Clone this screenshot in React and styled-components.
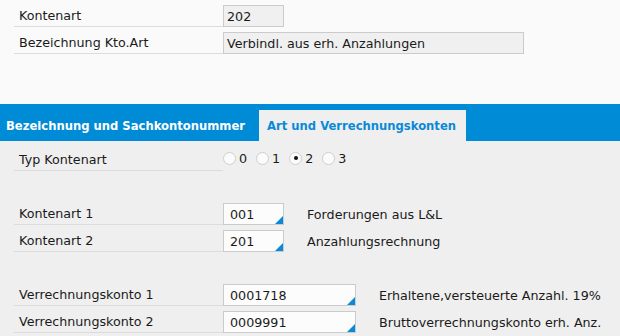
import styled, { createGlobalStyle } from "styled-components";

const GlobalStyle = createGlobalStyle`
  html, body {
    margin: 0;
    padding: 0;
    background: #efefef;
    font-family: "DejaVu Sans", Verdana, sans-serif;
    font-size: 12.7px;
    color: #1a1a1a;
  }
`;

const Page = styled.div`
  width: 620px;
  height: 336px;
  overflow: hidden;
  display: flex;
  flex-direction: column;
`;

const Header = styled.div`
  box-sizing: border-box;
  height: 104px;
  background: #fafafa;
  padding-top: 5px;
  display: flex;
  flex-direction: column;
  gap: 5px;
`;

const TabBar = styled.div`
  box-sizing: border-box;
  height: 37px;
  background: #008bd6;
  display: flex;
  align-items: flex-end;
`;

const Tab = styled.div`
  box-sizing: border-box;
  height: 31px;
  padding: 0 ${(p) => (p.$active ? "10px" : "14px")} 0 ${(p) => (p.$active ? "8px" : "6px")};
  display: flex;
  align-items: center;
  font-weight: bold;
  font-size: 11.6px;
  color: ${(p) => (p.$active ? "#0a8ad6" : "#ffffff")};
  background: ${(p) => (p.$active ? "#efefef" : "transparent")};
  white-space: nowrap;
`;

const Content = styled.div`
  flex: 1;
  background: #efefef;
  display: flex;
  flex-direction: column;
  padding-top: 8px;
`;

const Group = styled.div`
  display: flex;
  flex-direction: column;
  gap: 5px;
  margin-bottom: ${(p) => p.$after || 0}px;
`;

const Row = styled.div`
  display: flex;
  height: 22px;
  align-items: stretch;
`;

const Label = styled.div`
  box-sizing: border-box;
  width: 209px;
  margin-left: 14px;
  padding-left: 5px;
  border-bottom: 1px solid #dcdcdc;
  display: flex;
  align-items: center;
  white-space: nowrap;
`;

const Field = styled.div`
  box-sizing: border-box;
  position: relative;
  width: ${(p) => p.$width}px;
  height: 22px;
  border: 1px solid #cbcbcb;
  background: ${(p) => (p.$readOnly ? "#f0f0f0" : "#fcfcfc")};
  padding-left: ${(p) => (p.$readOnly ? 3 : 6)}px;
  display: flex;
  align-items: center;
  white-space: nowrap;

  ${(p) =>
    !p.$readOnly &&
    `
    &::after {
      content: "";
      position: absolute;
      right: 0;
      bottom: 0;
      width: 0;
      height: 0;
      border-style: solid;
      border-width: 0 0 8px 8px;
      border-color: transparent transparent #0a8ad6 transparent;
    }
  `}
`;

const Description = styled.div`
  margin-left: 23px;
  display: flex;
  align-items: center;
  white-space: nowrap;
`;

const RadioGroup = styled.div`
  display: flex;
  align-items: flex-start;
  padding-top: 2px;
  gap: 9px;
`;

const RadioOption = styled.label`
  display: flex;
  align-items: center;
  gap: 3px;
  height: 14px;
`;

const RadioCircle = styled.span`
  box-sizing: border-box;
  position: relative;
  width: 13px;
  height: 13px;
  border-radius: 50%;
  border: 1px solid #cfcfcf;
  background: #fbfbfb;

  ${(p) =>
    p.$checked &&
    `
    &::after {
      content: "";
      position: absolute;
      left: 3.5px;
      top: 3.5px;
      width: 4px;
      height: 4px;
      border-radius: 50%;
      background: #111;
    }
  `}
`;

const headerRows = [
  { label: "Kontenart", value: "202", width: 61 },
  { label: "Bezeichnung Kto.Art", value: "Verbindl. aus erh. Anzahlungen", width: 301 },
];

const kontenarten = [
  { label: "Kontenart 1", value: "001", text: "Forderungen aus L&L" },
  { label: "Kontenart 2", value: "201", text: "Anzahlungsrechnung" },
];

const verrechnung = [
  { label: "Verrechnungskonto 1", value: "0001718", text: "Erhaltene,versteuerte Anzahl. 19%" },
  { label: "Verrechnungskonto 2", value: "0009991", text: "Bruttoverrechnungskonto erh. Anz." },
];

function App() {
  const selected = 2;

  return (
    <Page>
      <GlobalStyle />
      <Header>
        {headerRows.map((r) => (
          <Row key={r.label}>
            <Label>{r.label}</Label>
            <Field $readOnly $width={r.width}>
              {r.value}
            </Field>
          </Row>
        ))}
      </Header>

      <TabBar>
        <Tab>Bezeichnung und Sachkontonummer</Tab>
        <Tab $active>Art und Verrechnungskonten</Tab>
      </TabBar>

      <Content>
        <Group $after={32}>
          <Row>
            <Label>Typ Kontenart</Label>
            <RadioGroup>
              {[0, 1, 2, 3].map((n) => (
                <RadioOption key={n}>
                  <RadioCircle $checked={n === selected} />
                  {n}
                </RadioOption>
              ))}
            </RadioGroup>
          </Row>
        </Group>

        <Group $after={32}>
          {kontenarten.map((r) => (
            <Row key={r.label}>
              <Label>{r.label}</Label>
              <Field $width={61}>{r.value}</Field>
              <Description>{r.text}</Description>
            </Row>
          ))}
        </Group>

        <Group>
          {verrechnung.map((r) => (
            <Row key={r.label}>
              <Label>{r.label}</Label>
              <Field $width={133}>{r.value}</Field>
              <Description>{r.text}</Description>
            </Row>
          ))}
        </Group>
      </Content>
    </Page>
  );
}

export default App;
